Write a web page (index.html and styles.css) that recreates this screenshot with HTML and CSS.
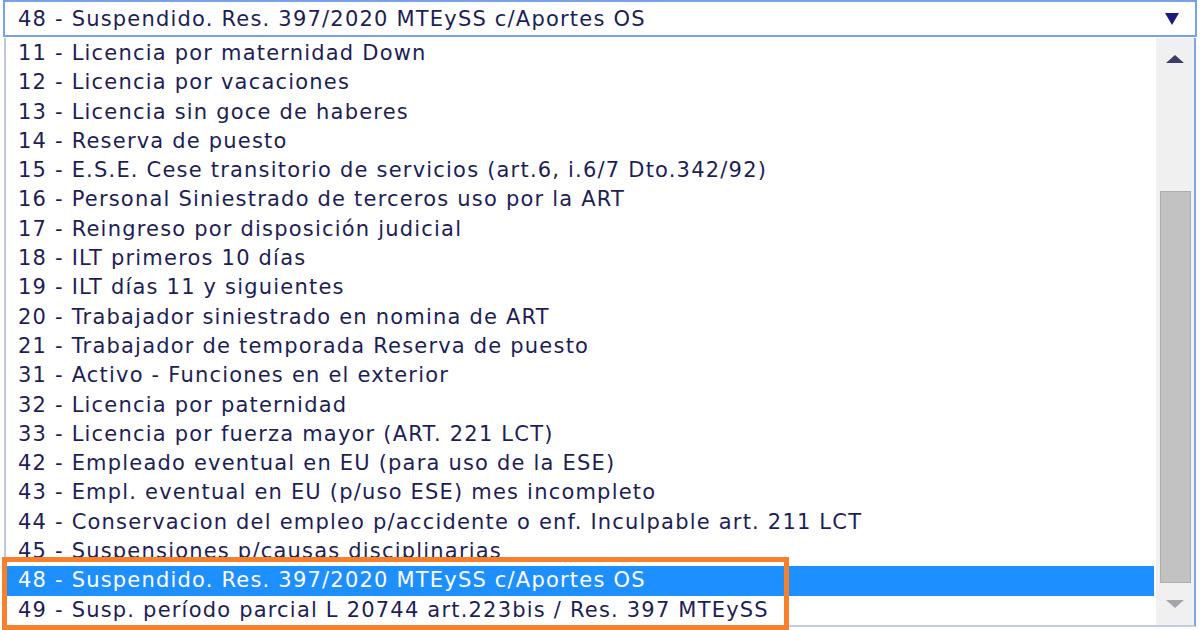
FILE: index.html
```html
<!DOCTYPE html>
<html lang="es">
  <head>
    <meta charset="UTF-8" />
    <meta name="viewport" content="width=device-width, initial-scale=1.0" />
    <title>Situación de revista</title>
    <link rel="stylesheet" href="styles.css">
  </head>
  <body>
    <div class="dropdown">
      <div class="select">
        <span>48 - Suspendido. Res. 397/2020 MTEySS c/Aportes OS</span>
        <svg class="caret" width="14" height="12" viewBox="0 0 14 12"><path d="M0 0 H14 L7 12 Z" fill="#1a1a80"/></svg>
      </div>
      <div class="list">
        <ul class="options">
          <li>11 - Licencia por maternidad Down</li>
          <li>12 - Licencia por vacaciones</li>
          <li>13 - Licencia sin goce de haberes</li>
          <li>14 - Reserva de puesto</li>
          <li>15 - E.S.E. Cese transitorio de servicios (art.6, i.6/7 Dto.342/92)</li>
          <li>16 - Personal Siniestrado de terceros uso por la ART</li>
          <li>17 - Reingreso por disposición judicial</li>
          <li>18 - ILT primeros 10 días</li>
          <li>19 - ILT días 11 y siguientes</li>
          <li>20 - Trabajador siniestrado en nomina de ART</li>
          <li>21 - Trabajador de temporada Reserva de puesto</li>
          <li>31 - Activo - Funciones en el exterior</li>
          <li>32 - Licencia por paternidad</li>
          <li>33 - Licencia por fuerza mayor (ART. 221 LCT)</li>
          <li>42 - Empleado eventual en EU (para uso de la ESE)</li>
          <li>43 - Empl. eventual en EU (p/uso ESE) mes incompleto</li>
          <li>44 - Conservacion del empleo p/accidente o enf. Inculpable art. 211 LCT</li>
          <li>45 - Suspensiones p/causas disciplinarias</li>
          <li class="selected">48 - Suspendido. Res. 397/2020 MTEySS c/Aportes OS</li>
          <li>49 - Susp. período parcial L 20744 art.223bis / Res. 397 MTEySS</li>
        </ul>
        <div class="scrollbar">
          <svg class="arrow" width="18" height="8" viewBox="0 0 18 8"><path d="M9 0 L18 8 H0 Z" fill="#3c3c64"/></svg>
          <div class="track"><div class="thumb"></div></div>
          <svg class="arrow" width="18" height="8" viewBox="0 0 18 8"><path d="M0 0 H18 L9 8 Z" fill="#a4a4ac"/></svg>
        </div>
      </div>
      <div class="highlight-box"></div>
    </div>
  </body>
</html>
```

FILE: styles.css
```css
body {
  margin: 0;
  background-color: white;
  font-family: "DejaVu Sans", Verdana, sans-serif;
  color: #1e1e56;
}
.dropdown {
  position: relative;
  width: 1200px;
  height: 630px;
}
.select {
  display: flex;
  align-items: center;
  justify-content: space-between;
  height: 33px;
  margin: 0 3px 0 3px;
  border: 2px solid #78a2e6;
  padding: 0 16px 0 13px;
  font-size: 21px;
  letter-spacing: 1.2px;
}
.caret {
  margin-top: 0;
}
.list {
  display: flex;
  height: 587px;
  margin: 1px 4px 0 4px;
  border-left: 2px solid #bfc6da;
  border-right: 2px solid #7ea4e4;
  border-bottom: 2px solid #c4cce0;
  overflow: hidden;
}
.options {
  flex: 1;
  list-style: none;
  margin: 0;
  padding: 0 2px 0 1px;
  font-size: 21px;
  letter-spacing: 1.2px;
}
.options li {
  height: 29.3px;
  line-height: 29.3px;
  padding-left: 11px;
  white-space: nowrap;
}
.options li:first-child {
  margin-top: 1px;
}
.options li.selected {
  background-color: #1e8fff;
  color: white;
}
.scrollbar {
  display: flex;
  flex-direction: column;
  align-items: center;
  width: 38px;
  background-color: #f0f0f0;
}
.scrollbar .arrow {
  margin: 17px 0;
}
.track {
  flex: 1;
  width: 100%;
  display: flex;
  flex-direction: column;
  justify-content: flex-end;
}
.thumb {
  height: 390px;
  margin: 0 3px 0 4px;
  background-color: #c2c2c2;
  border: 1px solid #adadad;
}
.highlight-box {
  position: absolute;
  left: 2px;
  top: 557px;
  width: 777px;
  height: 63px;
  border: 5px solid #f6802c;
}
```
